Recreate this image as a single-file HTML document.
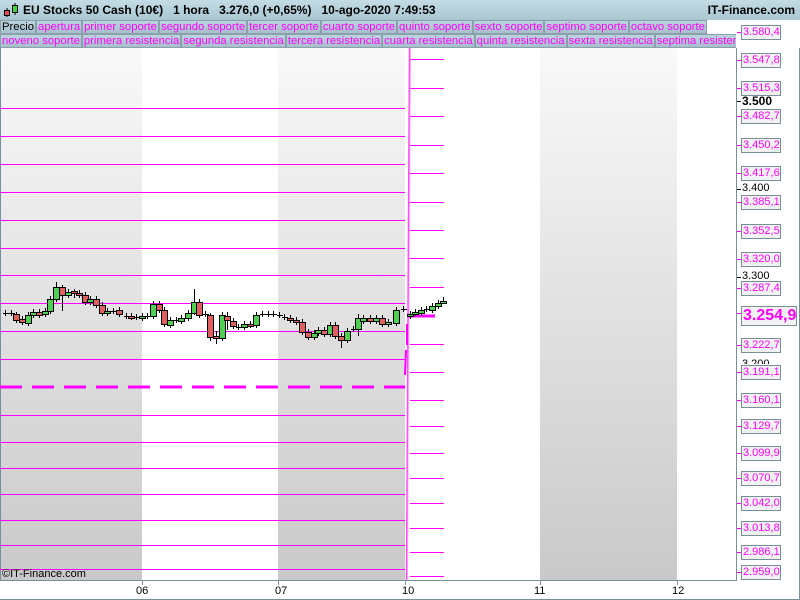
<!DOCTYPE html>
<html><head><meta charset="utf-8"><style>
*{margin:0;padding:0;box-sizing:border-box}
body{width:800px;height:600px;overflow:hidden;background:#fff;font-family:"Liberation Sans",sans-serif;position:relative}
.top{position:absolute;left:0;top:0;width:800px;height:20px;background:linear-gradient(#c4dce6,#a9c6d2);font-weight:bold;font-size:12px;line-height:20px}
.row{position:absolute;left:0;height:14px;display:flex;font-size:11.3px;line-height:12px;color:#f0f}
.row span{background:linear-gradient(#bcd4de,#a6c0cc);border:1px solid #8aa0aa;padding:0 1px;white-space:nowrap}
.ax{position:absolute;left:741px;width:40px;height:15px;border:1px solid #7a8e98;background:#f2f2f2;color:#f0f;font-size:11px;line-height:13px;padding-left:1px;white-space:nowrap}
.ax:before{content:"";position:absolute;left:-5px;top:6px;width:4px;height:1px;background:#f0f}
.bl{position:absolute;left:742px;font-size:11px;color:#000}
.bl:before{content:"";position:absolute;left:-5px;top:7px;width:4px;height:1px;background:#000}
.xl{position:absolute;top:585px;font-size:11px}
</style></head><body>
<div class="top"><svg style="position:absolute;left:3px;top:2px" width="16" height="16"><line x1="4" y1="6" x2="4" y2="15" stroke="#000"/><rect x="1.5" y="8.5" width="5" height="5" fill="#e05050" stroke="#000"/><line x1="12" y1="1" x2="12" y2="13" stroke="#000"/><rect x="9.5" y="3.5" width="5" height="7" fill="#40d040" stroke="#000"/></svg>
<span style="position:absolute;left:23px">EU Stocks 50 Cash (10€)&nbsp;&nbsp;&nbsp;1 hora&nbsp;&nbsp;&nbsp;3.276,0 (+0,65%)&nbsp;&nbsp;&nbsp;10-ago-2020 7:49:53</span>
<span style="position:absolute;right:5px">IT-Finance.com</span></div>
<div class="row" style="top:20px"><span style="color:#000">Precio</span><span>apertura</span><span>primer soporte</span><span>segundo soporte</span><span>tercer soporte</span><span>cuarto soporte</span><span>quinto soporte</span><span>sexto soporte</span><span>septimo soporte</span><span>octavo soporte</span></div>
<div class="row" style="top:34px;width:736px;overflow:hidden"><span>noveno soporte</span><span>primera resistencia</span><span>segunda resistencia</span><span>tercera resistencia</span><span>cuarta resistencia</span><span>quinta resistencia</span><span>sexta resistencia</span><span>septima resistencia</span></div>
<svg style="position:absolute;left:0;top:48px" width="800" height="552">
<defs><linearGradient id="g" x1="0" y1="0" x2="0" y2="1"><stop offset="0" stop-color="#f9f9f9"/><stop offset="1" stop-color="#c9c9c9"/></linearGradient></defs>
<g transform="translate(0,-48)">
<rect x="0" y="48" width="142" height="532" fill="url(#g)"/>
<rect x="278" y="48" width="127" height="532" fill="url(#g)"/>
<rect x="540" y="48" width="137" height="532" fill="url(#g)"/>
<line x1="0.5" y1="48" x2="0.5" y2="580" stroke="#7a8e98"/>
<line x1="736.5" y1="20" x2="736.5" y2="580" stroke="#7a8e98"/>
<line x1="0" y1="580.5" x2="737" y2="580.5" stroke="#7a8e98"/>
<line x1="0" y1="599.5" x2="800" y2="599.5" stroke="#7a8e98"/>
<line x1="799.5" y1="20" x2="799.5" y2="600" stroke="#7a8e98"/>
<g stroke="#f0f" stroke-width="1" fill="none">
<path d="M0 108.5H405M0 136.5H405M0 164.5H405M0 192.5H405M0 220.5H405M0 248.5H405M0 275.5H405M0 303.5H405M0 331.5H405M0 359.5H405M0 415.5H405M0 442.5H405M0 468.5H405M0 494.5H405M0 520.5H405M0 545.5H405M0 569.5H405"/>
<path d="M410 59.5H444M410 88.5H444M410 116.5H444M410 145.5H444M410 173.5H444M410 202.5H444M410 230.5H444M410 258.5H444M410 287.5H444M410 344.5H444M410 372.5H444M410 400.5H444M410 426.5H444M410 453.5H444M410 478.5H444M410 503.5H444M410 528.5H444M410 552.5H444M410 576.5H444"/>
</g>
<path d="M409.5 48L406.5 580" stroke="#f0f" stroke-width="1.5" opacity="0.7" fill="none"/>
<path d="M410.5 48L407.5 580" stroke="#f8f" stroke-width="1" opacity="0.6" fill="none"/>
<line x1="0" y1="387" x2="405" y2="387" stroke="#f0f" stroke-width="3" stroke-dasharray="22,10"/>
<line x1="408" y1="316" x2="435" y2="316" stroke="#f0f" stroke-width="3"/>
<line x1="407" y1="324" x2="407" y2="345" stroke="#f0f" stroke-width="2"/>
<line x1="406" y1="350" x2="405" y2="375" stroke="#f0f" stroke-width="2"/>
<g id="c" stroke="#000" stroke-width="1"></g>
</g>
</svg>
<script>
var d=[[5,313,313],[11,313,313],[16,314,320,'r',312,323],[22,319,322,'r'],[28,315,323,'g'],[33,312,315,'g'],[39,312,315,'r'],[45,311,314,'g'],[50,299,311,'g'],[56,287,299,'g',282,302],[62,287,295,'r',285,311],[68,292,295,'g'],[74,291,293,'r',289,298],[79,293,295,'r'],[85,295,302,'r'],[90,299,302,'g'],[96,299,305,'r',296,308],[102,305,313,'r'],[107,311,313,'g'],[113,311,311],[119,310,314,'r'],[126,316,316],[131,316,317,'r'],[136,317,317],[142,316,318,'g'],[147,316,316],[153,304,316,'g'],[159,304,310,'r',301,313],[164,310,324,'r'],[170,320,325,'g'],[176,320,320],[181,318,321,'g'],[188,313,318,'g'],[194,302,313,'g',289,315],[199,302,315,'r'],[205,314,314],[210,315,337,'r',313,341],[216,336,338,'r',331,344],[222,315,338,'g'],[227,316,320,'r',312,330],[233,321,326,'r'],[238,327,327],[244,324,327,'g'],[250,324,325,'r'],[256,315,325,'g'],[262,314,314],[268,314,314],[273,314,314],[279,315,315],[284,317,317],[290,318,320,'r'],[296,320,322,'r'],[302,322,332,'r'],[308,332,337,'r'],[314,333,337,'g'],[318,330,333,'g'],[324,330,334,'r'],[330,325,334,'g'],[335,325,336,'r'],[341,336,340,'r',333,348],[347,331,340,'g'],[353,329,329],[358,318,329,'g',314,336],[363,318,321,'g'],[370,318,321,'r'],[376,318,321,'g'],[382,318,324,'r'],[388,322,324,'g'],[396,310,323,'g'],[403,309,309],[410,314,316,'g'],[415,312,313,'g'],[421,310,313,'g'],[426,309,309],[432,306,310,'g'],[438,303,306,'g'],[443,301,303,'g',297,303]];
var s='';d.forEach(function(c){var x=c[0],t=c[1],b=c[2],wt=c[4]||t-3,wb=c[5]||b+3;
s+='<line x1="'+(x+.5)+'" y1="'+wt+'" x2="'+(x+.5)+'" y2="'+wb+'"/>';
if(c[3])s+='<rect x="'+(x-2.5)+'" y="'+(t+.5)+'" width="6" height="'+Math.max(b-t,2)+'" fill="'+(c[3]=='g'?'#50d050':'#e06060')+'"/>';
else s+='<line x1="'+(x-2)+'" y1="'+(t+.5)+'" x2="'+(x+4)+'" y2="'+(t+.5)+'"/>';});
document.getElementById('c').innerHTML=s;
</script>
<div class="ax" style="top:25px">3.580,4</div>
<div class="ax" style="top:53px">3.547,8</div>
<div class="ax" style="top:81px">3.515,3</div>
<div class="bl" style="top:94px;font-weight:bold;font-size:12px">3.500</div>
<div class="ax" style="top:109px">3.482,7</div>
<div class="ax" style="top:138px">3.450,2</div>
<div class="ax" style="top:166px">3.417,6</div>
<div class="bl" style="top:182px">3.400</div>
<div class="ax" style="top:195px">3.385,1</div>
<div class="ax" style="top:224px">3.352,5</div>
<div class="ax" style="top:252px">3.320,0</div>
<div class="bl" style="top:270px">3.300</div>
<div class="ax" style="top:281px">3.287,4</div>
<div class="ax" style="top:306px;height:20px;width:56px;font-size:16px;font-weight:bold;line-height:18px">3.254,9</div>
<div class="ax" style="top:338px">3.222,7</div>
<div class="bl" style="top:358px;height:6px;overflow:hidden">3.200</div>
<div class="ax" style="top:365px">3.191,1</div>
<div class="ax" style="top:393px">3.160,1</div>
<div class="ax" style="top:419px">3.129,7</div>
<div class="ax" style="top:446px">3.099,9</div>
<div class="ax" style="top:471px">3.070,7</div>
<div class="ax" style="top:496px">3.042,0</div>
<div class="ax" style="top:521px">3.013,8</div>
<div class="ax" style="top:545px">2.986,1</div>
<div class="ax" style="top:565px">2.959,0</div>
<div style="position:absolute;left:2px;top:568px;font-size:11px">©IT-Finance.com</div>
<div class="xl" style="left:136px">06</div>
<div class="xl" style="left:275px">07</div>
<div class="xl" style="left:402px">10</div>
<div class="xl" style="left:534px">11</div>
<div class="xl" style="left:672px">12</div>
<svg style="position:absolute;left:0;top:580px" width="800" height="6"><path d="M142.5 0V5M278.5 0V5M405.5 0V5M540.5 0V5M677.5 0V5" stroke="#7a8e98"/></svg>
</body></html>
